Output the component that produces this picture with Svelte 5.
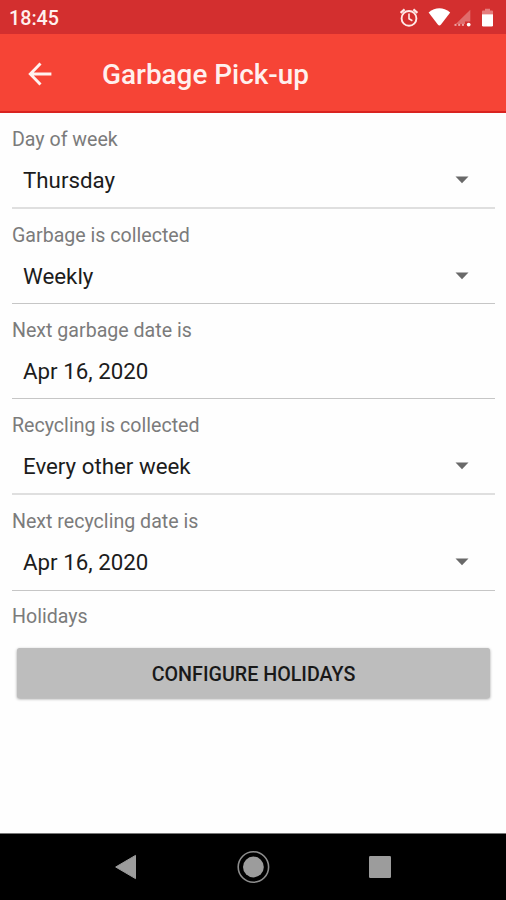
<script>
  const fields = [
    { label: 'Day of week', value: 'Thursday', menu: true, height: 96, soft: true },
    { label: 'Garbage is collected', value: 'Weekly', menu: true, height: 95 },
    { label: 'Next garbage date is', value: 'Apr 16, 2020', menu: false, height: 95 },
    { label: 'Recycling is collected', value: 'Every other week', menu: true, height: 96, soft: true },
    { label: 'Next recycling date is', value: 'Apr 16, 2020', menu: true, height: 96 }
  ];
</script>

<div class="screen">
  <div class="status">
    <span class="time">18:45</span>
    <svg class="status-icons" width="98" height="34" viewBox="0 0 98 34">
      <g fill="none" stroke="#ffe9e7" stroke-width="1.9">
        <circle cx="11" cy="18.4" r="7.4" />
        <path d="M11 13.6v5.2l3.4 2" stroke-width="1.6" />
        <path d="M2.6 12.8l4-3.4M19.4 12.8l-4-3.4" stroke-width="2.2" />
      </g>
      <path d="M30.6 12.4Q41.3 4.2 52.2 12.4L43 24.4Q41.4 26.4 39.8 24.4Z" fill="#fff" />
      <path d="M72.3 9.8V21.6H67V24H57.8Z" fill="#e06c6c" />
      <g fill="#eca4a4"><rect x="56.5" y="23.9" width="2" height="2" /><rect x="60.2" y="23.9" width="2" height="2" /><rect x="63.9" y="23.9" width="2" height="2" /></g>
      <circle cx="70.7" cy="24.6" r="1.9" fill="#fff" />
      <path d="M84 14.3V11.5q0-1 1-1h2V8.8h5v1.7h2q1 0 1 1v2.8z" fill="#e57d7d" />
      <path d="M84 14.2h11v11q0 1.3-1.3 1.3h-8.4q-1.3 0-1.3-1.3z" fill="#fff" />
    </svg>
  </div>

  <header>
    <svg class="back" width="24" height="24" viewBox="0 0 24 24">
      <path d="M23.4 12H2.5M12.5 1.6L2.3 12L12.5 22.4" fill="none" stroke="#fff2f0" stroke-width="2.9" />
    </svg>
    <h1>Garbage Pick-up</h1>
  </header>

  <main>
    {#each fields as field}
      <section class="field" class:soft={field.soft} style="height: {field.height}px">
        <div class="label">{field.label}</div>
        <div class="row">
          <span>{field.value}</span>
          {#if field.menu}
            <svg width="14" height="8" viewBox="0 0 14 8"><path d="M.5 .6h13L7 7.2z" fill="#696969" /></svg>
          {/if}
        </div>
      </section>
    {/each}
    <div class="label last">Holidays</div>
    <button>CONFIGURE HOLIDAYS</button>
  </main>

  <nav>
    <svg width="22" height="26" viewBox="0 0 22 26"><path d="M.7 13L20.5 1.4V24.6Z" fill="#9c9c9c" stroke="#9c9c9c" stroke-linejoin="round" /></svg>
    <svg width="34" height="34" viewBox="0 0 34 34"><circle cx="17.4" cy="17" r="15.2" fill="none" stroke="#8d8d8d" stroke-width="1.6" /><circle cx="17.4" cy="17" r="10.4" fill="#9c9c9c" /></svg>
    <svg width="22" height="22" viewBox="0 0 22 22"><rect width="22" height="22" rx="1.2" fill="#9c9c9c" /></svg>
  </nav>
</div>

<style>
  :global(body) { margin: 0; }
  .screen {
    box-sizing: border-box;
    width: 506px;
    height: 900px;
    display: flex;
    flex-direction: column;
    background: #fefefe;
    font-family: Roboto, "Liberation Sans", sans-serif;
    overflow: hidden;
  }
  .status {
    height: 34px;
    flex: none;
    display: flex;
    align-items: center;
    justify-content: space-between;
    background: #d32f2f;
    color: #fff0ee;
    padding-left: 9px;
  }
  .time { font-size: 19.7px; font-weight: 500; line-height: 34px; padding-top: 3px; }
  .status-icons { margin-right: 10px; }
  header {
    box-sizing: border-box;
    height: 79px;
    flex: none;
    display: flex;
    align-items: center;
    background: #f64436;
    border-bottom: 2px solid #d92320;
    padding: 3px 0 0 28px;
  }
  h1 {
    margin: 0 0 0 50px;
    padding-top: 2px;
    color: #fff0ee;
    font-size: 27.9px;
    font-weight: 500;
    line-height: 36px;
  }
  main { flex: 1; padding: 0 11px 0 12px; display: flex; flex-direction: column; }
  .field {
    box-sizing: border-box;
    flex: none;
    border-bottom: 1px solid #c6c6c6;
  }
  .field.soft { border-bottom: 2px solid #dfdfdf; }
  .label {
    padding-top: 14px;
    height: 25px;
    font-size: 19.6px;
    line-height: 25px;
    color: #7b7b7b;
  }
  .label.last { padding-top: 13px; }
  .row {
    display: flex;
    align-items: center;
    justify-content: space-between;
    height: 30px;
    margin-top: 13px;
    padding: 0 26px 0 11px;
    font-size: 22.3px;
    color: #1c1c1c;
  }
  button {
    width: 473px;
    height: 50px;
    margin: 19px 0 0 5px;
    padding: 2px 0 0;
    border: 0;
    border-radius: 2.5px;
    background: #bdbdbd;
    color: #191919;
    font: 500 19.7px Roboto, "Liberation Sans", sans-serif;
    box-shadow: 0 1px 3px rgba(0, 0, 0, 0.38);
  }
  nav {
    box-sizing: border-box;
    height: 67px;
    flex: none;
    display: flex;
    align-items: center;
    justify-content: space-between;
    border-top: 1px solid #777;
    background: #000;
    padding: 0 115px;
  }
</style>
